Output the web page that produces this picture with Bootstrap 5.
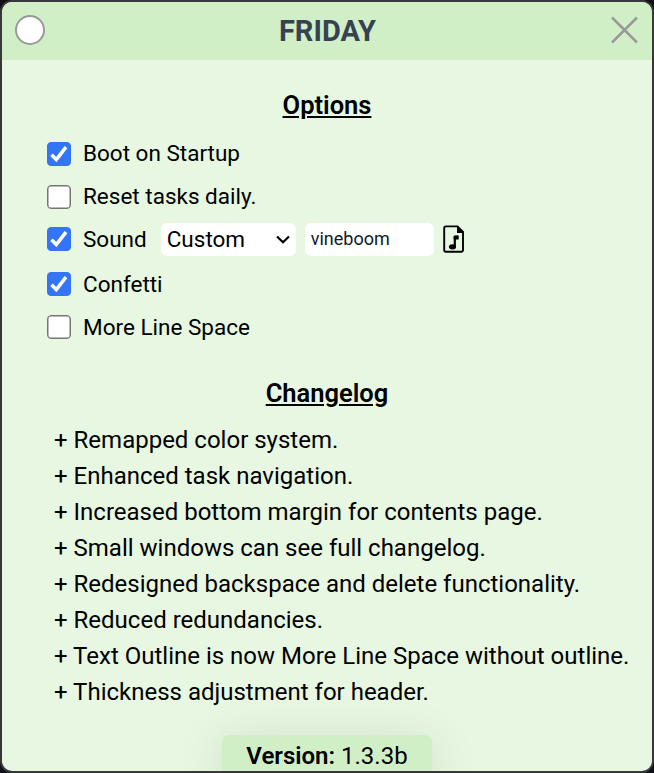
<!DOCTYPE html>
<html lang="en">
<head>
<meta charset="utf-8">
<meta name="viewport" content="width=device-width, initial-scale=1">
<title>Friday</title>
<link rel="stylesheet" href="https://cdn.jsdelivr.net/npm/bootstrap@5.3.0/dist/css/bootstrap.min.css">
<style>
body { background: #101018; color: #000; font-family: Roboto, sans-serif; font-size: 24px; line-height: 36px; }
.app-window { border: 2px solid #38383c; border-radius: 12px; background: #e7f7e1; }
.title-bar { height: 58px; background: #d1efc7; padding: 0 12px 2px 13px; }
.title-text { font-size: 29px; font-weight: 700; color: #374151; line-height: 54px; padding-top: 2px; }
.color-dot { width: 30px; height: 30px; border: 2px solid #999; background: #fff; }
.section-title { padding-top: 3px; font-size: 25.5px; font-weight: 600; line-height: 36px; text-decoration: underline; }
.options { margin-top: 8px; padding-left: 45px; font-size: 22.5px; }
.option { height: 43px; }
.option-sound { height: 45px; padding-bottom: 2px; }
.option .form-check-input { width: 24px; height: 24px; margin: 1px 12px 0 0; border: 1.5px solid #767676; box-shadow: inset 0 0 0 .5px #767676; border-radius: 4px; background-color: #fff; }
.option-upper .form-check-input { margin-top: 3px; }
.option .form-check-input:checked { background-color: #3375f6; border-color: #3375f6; box-shadow: none; background-size: 24px 24px; background-position: center; background-origin: border-box; background-image: url("data:image/svg+xml,%3Csvg xmlns='http://www.w3.org/2000/svg' viewBox='0 0 24 24'%3E%3Cpath d='M4.5 12.8 9.3 17.6 19 5.2' fill='none' stroke='%23fff' stroke-width='3.5'/%3E%3C/svg%3E"); }
.sound-select { width: 135px; height: 33px; margin: 2px 0 0 14px; padding: 0 6px; border: 0; border-radius: 6px; font-size: 22.5px; line-height: 33px; color: #000; background: #fff url("data:image/svg+xml,%3Csvg xmlns='http://www.w3.org/2000/svg' viewBox='0 0 14 9'%3E%3Cpath d='M1 1.5 7 7.3 13 1.5' fill='none' stroke='%23000' stroke-width='2.2'/%3E%3C/svg%3E") no-repeat right 6px center / 14px 9px; }
.sound-name { width: 129px; height: 33px; margin: 2px 0 0 9px; padding: 0 6px 2px; border: 0; border-radius: 6px; font-size: 18px; line-height: 31px; color: #111827; }
.changelog { padding-left: 52px; margin-top: 11px; }
.version-badge { width: 210px; height: 42px; margin-top: 25px; border-radius: 7px; background: #d1efc7; box-shadow: 0 10px 50px rgba(0,0,0,.13); line-height: 42px; }
.version-badge strong { font-weight: 600; }
</style>
<script src="https://cdn.jsdelivr.net/npm/bootstrap@5.3.0/dist/js/bootstrap.bundle.min.js"></script>
</head>
<body class="vh-100 overflow-hidden">
<div class="app-window h-100 overflow-hidden d-flex flex-column">
  <header class="title-bar d-flex align-items-center justify-content-between flex-shrink-0">
    <span class="color-dot rounded-circle"></span>
    <h1 class="title-text m-0">FRIDAY</h1>
    <svg width="30" height="30" viewBox="0 0 30 30" fill="none" stroke="#999" stroke-width="2.5"><path d="M2 2.5 27 27.5M27 2.5 2 27.5"/></svg>
  </header>
  <main class="flex-shrink-0">
    <h2 class="section-title text-center mb-0 mt-4">Options</h2>
    <div class="options">
      <label class="option option-upper d-flex align-items-center"><input class="form-check-input" type="checkbox" checked>Boot on Startup</label>
      <label class="option option-upper d-flex align-items-center"><input class="form-check-input" type="checkbox">Reset tasks daily.</label>
      <div class="option option-sound d-flex align-items-center">
        <label class="d-flex align-items-center"><input class="form-check-input" type="checkbox" checked>Sound</label>
        <select class="form-select sound-select" aria-label="Sound"><option>Custom</option></select>
        <input class="form-control sound-name" type="text" value="vineboom" aria-label="Sound name">
        <svg class="ms-2" width="24" height="30" viewBox="0 0 24 30"><path d="M4 2.4h11.5L21 8v18a1.8 1.8 0 0 1-1.8 1.8H4A1.8 1.8 0 0 1 2.2 26V4.2A1.8 1.8 0 0 1 4 2.4Z" fill="none" stroke="#000" stroke-width="1.9"/><path d="M15 2v7h6.5V8Z"/><path d="M12.8 22.5V12.8h3" fill="none" stroke="#000" stroke-width="2.2"/><path d="M11.7 13.2q0-1.6 1.6-1.6h3.4v4h-5Z"/><ellipse cx="10.5" cy="22.8" rx="3.6" ry="2.6"/></svg>
      </div>
      <label class="option d-flex align-items-center"><input class="form-check-input" type="checkbox" checked>Confetti</label>
      <label class="option d-flex align-items-center"><input class="form-check-input" type="checkbox">More Line Space</label>
    </div>
    <h2 class="section-title text-center mb-0 mt-4">Changelog</h2>
    <ul class="changelog list-unstyled mb-0 text-nowrap">
      <li>+ Remapped color system.</li>
      <li>+ Enhanced task navigation.</li>
      <li>+ Increased bottom margin for contents page.</li>
      <li>+ Small windows can see full changelog.</li>
      <li>+ Redesigned backspace and delete functionality.</li>
      <li>+ Reduced redundancies.</li>
      <li>+ Text Outline is now More Line Space without outline.</li>
      <li>+ Thickness adjustment for header.</li>
    </ul>
    <div class="version-badge mx-auto text-center"><strong>Version:</strong> 1.3.3b</div>
  </main>
</div>
</body>
</html>
